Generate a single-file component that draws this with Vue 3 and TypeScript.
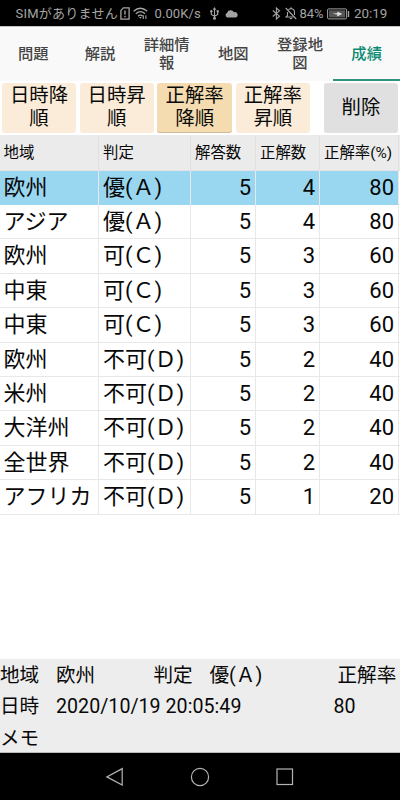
<script setup lang="ts">
import { ref, computed } from 'vue'

interface Result {
  region: string
  grade: string
  answered: number
  correct: number
  rate: number
  time?: string
}

const tabs: string[] = ['問題', '解説', '詳細情報', '地図', '登録地図', '成績']
const activeTab = ref(5)

const sorts: string[] = ['日時降順', '日時昇順', '正解率降順', '正解率昇順']
const activeSort = ref(2)

const headers: string[] = ['地域', '判定', '解答数', '正解数', '正解率(%)']
const results: Result[] = [
  { region: '欧州', grade: '優(Ａ)', answered: 5, correct: 4, rate: 80, time: '2020/10/19 20:05:49' },
  { region: 'アジア', grade: '優(Ａ)', answered: 5, correct: 4, rate: 80 },
  { region: '欧州', grade: '可(Ｃ)', answered: 5, correct: 3, rate: 60 },
  { region: '中東', grade: '可(Ｃ)', answered: 5, correct: 3, rate: 60 },
  { region: '中東', grade: '可(Ｃ)', answered: 5, correct: 3, rate: 60 },
  { region: '欧州', grade: '不可(Ｄ)', answered: 5, correct: 2, rate: 40 },
  { region: '米州', grade: '不可(Ｄ)', answered: 5, correct: 2, rate: 40 },
  { region: '大洋州', grade: '不可(Ｄ)', answered: 5, correct: 2, rate: 40 },
  { region: '全世界', grade: '不可(Ｄ)', answered: 5, correct: 2, rate: 40 },
  { region: 'アフリカ', grade: '不可(Ｄ)', answered: 5, correct: 1, rate: 20 },
]
const selected = ref(0)
const current = computed<Result>(() => results[selected.value])
</script>

<template>
  <div class="screen">
    <header class="status">
      <span class="carrier">SIMがありません</span>
      <svg class="sim" width="10" height="13" viewBox="0 0 10 13">
        <path d="M3.4 .9H9.1V12.1H.9V3.4Z" fill="none" stroke="currentColor" stroke-width="1.3" />
        <path d="M5 3.6V7.6M5 8.8V10.2" stroke="currentColor" stroke-width="1.4" />
      </svg>
      <svg class="wifi" width="15" height="13" viewBox="0 0 15 13">
        <g fill="none" stroke="currentColor" stroke-width="1.3">
          <path d="M.6 4.2Q7.3-1.8 14.2 4.2" />
          <path d="M2.8 6.7Q7.4 2.6 12 6.7" />
          <path d="M5 9.2Q7.4 6.9 9.6 9.2" />
        </g>
        <path d="M6 10L7.4 11.8L8.6 10Z" fill="currentColor" />
        <path d="M10.3 8.3V12M12.9 8.3V12" stroke="currentColor" stroke-width="1.1" />
      </svg>
      <span class="speed">0.00K/s</span>
      <svg class="usb" width="9" height="13" viewBox="0 0 9 13">
        <path d="M4.5 2V11M4.5 9.3L1.3 7.4V4.5M4.5 9.3L7.7 7.4V4.5" fill="none" stroke="currentColor" stroke-width="1.1" />
        <path d="M4.5 0L6.2 2.7H2.8Z" fill="currentColor" />
        <circle cx="1.3" cy="4.3" r="1.2" fill="currentColor" />
        <path d="M6.6 3.2H8.8V5.4H6.6Z" fill="currentColor" />
        <circle cx="4.5" cy="11.2" r="1.5" fill="currentColor" />
      </svg>
      <svg class="cloud" width="13" height="9" viewBox="0 0 13 9">
        <path d="M2.5 8.5A2.3 2.3 0 0 1 2 4.1A3.8 3.8 0 0 1 9 3.3A2.7 2.7 0 0 1 10.7 8.5Z" fill="currentColor" />
      </svg>
      <svg class="bt" width="9" height="13" viewBox="0 0 9 13">
        <path d="M.8 3.5L7.5 9.2L4.4 12V1L7.5 3.8L.8 9.5" fill="none" stroke="currentColor" stroke-width="1.1" />
      </svg>
      <svg class="bell" width="12" height="13" viewBox="0 0 12 13">
        <path d="M3.4 2.7C4.2 1.9 4.9 1.8 6 1.8C8.3 1.8 9.5 3.5 9.5 5.5V8.1M8.6 10H1.1L2.5 8.5V5" fill="none" stroke="currentColor" stroke-width="1.1" />
        <path d="M.7 1L11.2 12" stroke="currentColor" stroke-width="1.1" />
        <path d="M4.6 11H7.3A1.35 1.35 0 0 1 4.6 11ZM5.2 .5H6.8V2H5.2Z" fill="currentColor" />
      </svg>
      <span class="percent">84%</span>
      <svg class="battery" width="23" height="12" viewBox="0 0 23 12">
        <rect x=".6" y=".9" width="19" height="10" rx="1" fill="none" stroke="currentColor" />
        <rect x="2" y="2.3" width="16.2" height="7.2" fill="#555" />
        <path d="M21.5 3V9" stroke="currentColor" stroke-width="1.4" />
        <path d="M5.5 5.8L10.6 5L10.4 3.4L15.3 5.9L10.1 8.4L10.2 6.6Z" fill="#ddd" />
      </svg>
      <span class="clock">20:19</span>
    </header>

    <nav class="tabs">
      <button
        v-for="(tab, i) in tabs"
        :key="tab"
        class="tab"
        :class="{ active: i === activeTab }"
        @click="activeTab = i"
      >{{ tab }}</button>
    </nav>

    <div class="actions">
      <button
        v-for="(sort, i) in sorts"
        :key="sort"
        class="sort"
        :class="{ active: i === activeSort }"
        @click="activeSort = i"
      >{{ sort }}</button>
      <button class="delete">削除</button>
    </div>

    <main class="table">
      <div class="row head">
        <span v-for="h in headers" :key="h" class="cell">{{ h }}</span>
      </div>
      <div
        v-for="(r, i) in results"
        :key="i"
        class="row"
        :class="{ selected: i === selected }"
        @click="selected = i"
      >
        <span class="cell">{{ r.region }}</span>
        <span class="cell">{{ r.grade }}</span>
        <span class="cell num">{{ r.answered }}</span>
        <span class="cell num">{{ r.correct }}</span>
        <span class="cell num">{{ r.rate }}</span>
      </div>
    </main>

    <section class="detail">
      <div class="line summary">
        <span>地域</span><span>{{ current.region }}</span>
        <span>判定</span><span>{{ current.grade }}</span>
        <span>正解率</span>
      </div>
      <div class="line dated">
        <span>日時</span><span class="value">{{ current.time }}</span><span>{{ current.rate }}</span>
      </div>
      <div class="line"><span>メモ</span></div>
    </section>

    <footer class="navbar">
      <svg width="20" height="20" viewBox="0 0 20 20"><path d="M17.2 1.6V18.1L1.8 9.9Z" /></svg>
      <svg width="20" height="20" viewBox="0 0 20 20"><circle cx="10" cy="10" r="8.6" /></svg>
      <svg width="20" height="20" viewBox="0 0 20 20"><rect x="2" y="2" width="15.5" height="15.5" /></svg>
    </footer>
  </div>
</template>

<style>
body {
  background: #fff;
}
</style>

<style scoped>
.screen {
  width: 400px;
  height: 800px;
  display: flex;
  flex-direction: column;
  overflow: hidden;
  background: #fff;
  color: #080808;
  font-family: Roboto, "Noto Sans CJK JP", sans-serif;
}
button {
  border: 0;
  padding: 0;
  margin: 0;
  font-family: inherit;
  color: inherit;
}
.status {
  height: 26px;
  flex: none;
  display: flex;
  align-items: center;
  box-sizing: border-box;
  padding: 1px 0 0 15.5px;
  background: #000;
  color: #a4a4a4;
  font-size: 13px;
  line-height: 20px;
  white-space: nowrap;
}
.status svg {
  flex: none;
}
.carrier {
  width: 104px;
  letter-spacing: 0.25px;
}
.wifi {
  margin-left: 3.5px;
}
.speed {
  margin-left: 6.5px;
  width: 46px;
  letter-spacing: 0.1px;
}
.usb {
  margin-left: 9.5px;
}
.cloud {
  margin-left: 6px;
}
.bt {
  margin-left: 34px;
}
.bell {
  margin-left: 4px;
}
.percent {
  margin-left: 2.5px;
  width: 25px;
}
.battery {
  margin-left: 2px;
}
.clock {
  margin-left: 4.5px;
  font-size: 13.4px;
}
.tabs {
  height: 55px;
  flex: none;
  display: grid;
  grid-template-columns: repeat(6, 1fr);
  box-sizing: border-box;
  border-top: 1px solid #c4c4c4;
  background: #f9f9f9;
}
.tab {
  padding: 2px 10px 0;
  border-bottom: 2px solid transparent;
  background: none;
  color: #444;
  font-size: 15.3px;
  font-weight: 500;
  line-height: 18px;
}
.tab.active {
  color: #0b8b74;
  border-bottom-color: #32937f;
}
.actions {
  height: 54px;
  flex: none;
  display: grid;
  grid-template-columns: 74px 74px 75px 74px 74px;
  column-gap: 3.6px;
  box-sizing: border-box;
  padding: 2px 2px 2px;
}
.sort,
.delete {
  padding: 0 6px 2px;
  border-radius: 3px;
  font-size: 19.4px;
  line-height: 23px;
}
.sort {
  background: #faecd8;
}
.sort.active {
  background: #f4dcb0;
  box-shadow: inset 0 -1px 0 #cfbc99;
}
.delete {
  margin-left: 10.6px;
  width: 74px;
  padding-bottom: 1px;
  background: #e0e0e0;
}
.table {
  flex: 1;
}
.row {
  display: grid;
  grid-template-columns: 99px 92px 65px 64px 79px 1px;
  height: 34.42px;
  box-sizing: border-box;
  border-bottom: 1px solid #e8e8e8;
}
.cell {
  padding: 0 4px;
  border-right: 1px solid #e8e8e8;
  font-size: 22px;
  line-height: 34px;
  white-space: nowrap;
}
.cell:first-child {
  padding-left: 3.5px;
}
.num {
  text-align: right;
}
.row.selected .cell {
  background: #99d7f1;
}
.head {
  height: 35.6px;
  background: #ebebeb;
  border-bottom-color: #e4e4e4;
}
.head .cell {
  border-right-color: #e0e0e0;
  font-size: 15.4px;
  line-height: 36px;
}
.detail {
  height: 94px;
  flex: none;
  box-sizing: border-box;
  padding-top: 1px;
  background: #ededed;
  border-bottom: 1px solid #bbb;
  font-size: 19.6px;
  line-height: 31.3px;
  white-space: nowrap;
}
.line {
  display: grid;
  height: 31.3px;
}
.value {
  letter-spacing: 0.04px;
}
.summary {
  grid-template-columns: 56px 97.5px 56px 128px auto;
}
.dated {
  grid-template-columns: 56px 277.5px auto;
}
.navbar {
  height: 47px;
  flex: none;
  display: flex;
  justify-content: center;
  align-items: center;
  gap: 65px;
  background: #000;
}
.navbar svg {
  fill: none;
  stroke: #b4b4b4;
  stroke-width: 1.2;
}
</style>
